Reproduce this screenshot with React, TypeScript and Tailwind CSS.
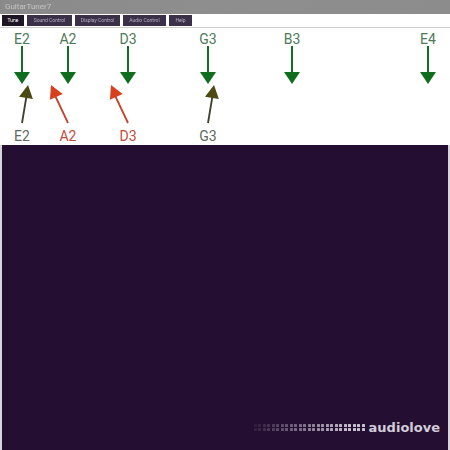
import React from "react";

const tabs = ["Tune", "Sound Control", "Display Control", "Audio Control", "Help"];
const tabW = [22, 45, 45, 43, 23];

const top = [
  { n: "E2", x: 22 },
  { n: "A2", x: 68 },
  { n: "D3", x: 128 },
  { n: "G3", x: 208 },
  { n: "B3", x: 292 },
  { n: "E4", x: 428 },
];

const bottom = [
  { n: "E2", tx: 22, hx: 28, line: "#3f3f2c", head: "#4b4a12", label: "#5d6a5c" },
  { n: "A2", tx: 68, hx: 51, line: "#c4452e", head: "#d8401c", label: "#c5493a" },
  { n: "D3", tx: 128, hx: 111, line: "#c4452e", head: "#d8401c", label: "#c5493a" },
  { n: "G3", tx: 208, hx: 214, line: "#3f3f2c", head: "#4b4a12", label: "#5d6a5c" },
];

function headPoints(tx: number, ty: number, hx: number, hy: number, len: number, half: number) {
  const dx = hx - tx;
  const dy = hy - ty;
  const d = Math.sqrt(dx * dx + dy * dy);
  const ux = dx / d;
  const uy = dy / d;
  const bx = hx - ux * len;
  const by = hy - uy * len;
  const px = -uy;
  const py = ux;
  return `${hx},${hy} ${bx + px * half},${by + py * half} ${bx - px * half},${by - py * half}`;
}

export default function App() {
  return (
    <div className="w-[450px] h-[450px] bg-white flex flex-col overflow-hidden" style={{ fontFamily: "Roboto, 'Liberation Sans', sans-serif" }}>
      <div className="h-[14px] bg-gradient-to-r from-[#8a8a8a] via-[#8e8e8e] to-[#8c8c8c] flex items-center px-[5px]">
        <span className="text-[8px] leading-none text-[#c4c4c4] blur-[0.6px]">GuitarTuner7</span>
      </div>
      <div className="h-[13px] flex items-stretch gap-[3px] px-[2px] py-[1px] bg-white">
        {tabs.map((t, i) => (
          <div
            key={t}
            className={
              "flex items-center justify-center text-[5px] leading-none " +
              (i === 0 ? "bg-[#1d1525] text-white" : "bg-[#3a3048] text-[#b8b0c4]")
            }
            style={{ width: tabW[i] }}
          >
            <span className="blur-[0.4px]">{t}</span>
          </div>
        ))}
      </div>
      <div className="h-[1px] bg-[#cfcfcf]" />
      <div className="h-[117px] bg-white">
        <svg width="450" height="117" viewBox="0 28 450 117">
          {top.map((a) => (
            <g key={a.n + a.x}>
              <text x={a.x} y={44} textAnchor="middle" fontSize="14" fill="#4d7a55" fontFamily="Roboto, 'Liberation Sans', sans-serif">
                {a.n}
              </text>
              <line x1={a.x} y1={46} x2={a.x} y2={74} stroke="#127024" strokeWidth="2" />
              <polygon points={`${a.x - 8},72 ${a.x + 8},72 ${a.x},84`} fill="#0e6e1e" />
            </g>
          ))}
          {bottom.map((a) => (
            <g key={"b" + a.n}>
              <line x1={a.tx} y1={123} x2={a.hx + (a.tx - a.hx) * 0.25} y2={96} stroke={a.line} strokeWidth="1.8" />
              <polygon points={headPoints(a.tx, 123, a.hx, 85, 13, 7)} fill={a.head} />
              <text x={a.tx} y={141} textAnchor="middle" fontSize="14" fill={a.label} fontFamily="Roboto, 'Liberation Sans', sans-serif">
                {a.n}
              </text>
            </g>
          ))}
        </svg>
      </div>
      <div className="flex-1 bg-[#240f32] border-x-2 border-[#d8d4dc] relative">
        <div className="absolute right-[8px] bottom-[16px] flex items-center gap-[4px]">
          <div className="grid grid-rows-2 grid-flow-col gap-[1.5px]">
            {Array.from({ length: 50 }).map((_, i) => (
              <div
                key={i}
                className="w-[3px] h-[3px] rounded-[0.5px] bg-[#c9c2d2]"
                style={{ opacity: Math.min(1, 0.08 + (i / 50) * 1.1) }}
              />
            ))}
          </div>
          <span className="text-[13px] font-bold leading-none text-[#d2ccd8]" style={{ fontFamily: "'DejaVu Sans', sans-serif" }}>
            audiolove
          </span>
        </div>
      </div>
    </div>
  );
}
